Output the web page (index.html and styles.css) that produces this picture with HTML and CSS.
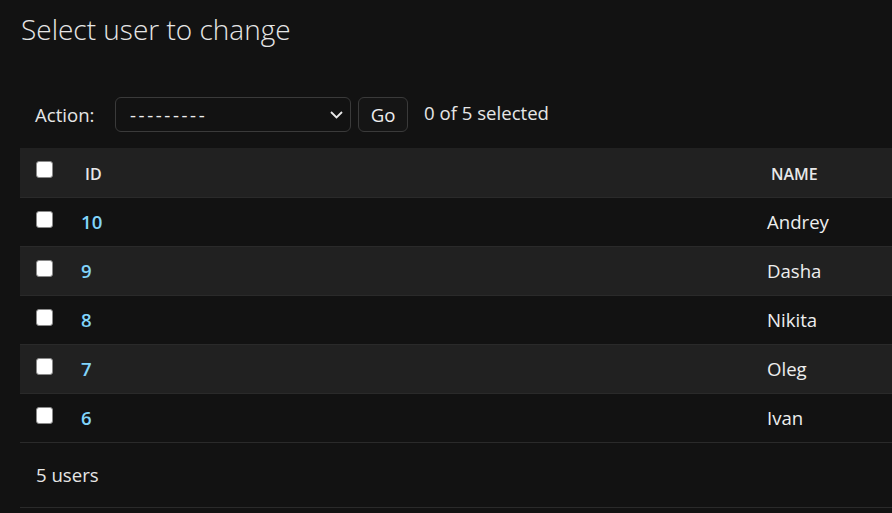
FILE: index.html
```html
<!DOCTYPE html>
<html lang="en">
<head>
<meta charset="utf-8">
<title>Select user to change</title>
<link rel="stylesheet" href="styles.css">
</head>
<body>
<div class="page">
  <h1 class="title">Select user to change</h1>
  <div class="actions">
    <span class="action-label">Action:</span>
    <div class="select">
      <span class="select-text">---------</span>
      <svg class="chevron" width="13" height="8" viewBox="0 0 13 8"><path d="M1 1 L6.5 6.5 L12 1" fill="none" stroke="#e8e8e8" stroke-width="1.8"/></svg>
    </div>
    <button class="go">Go</button>
    <span class="counter">0 of 5 selected</span>
  </div>
  <table class="results">
    <colgroup>
      <col class="c1">
      <col class="c2">
      <col class="c3">
    </colgroup>
    <thead>
      <tr>
        <th class="col-check"><input type="checkbox" class="cb"></th>
        <th class="col-id"><span class="th-label">ID</span></th>
        <th class="col-name"><span class="th-label">NAME</span></th>
      </tr>
    </thead>
    <tbody>
      <tr><td class="col-check"><input type="checkbox" class="cb"></td><th class="col-id"><a href="#">10</a></th><td class="col-name">Andrey</td></tr>
      <tr><td class="col-check"><input type="checkbox" class="cb"></td><th class="col-id"><a href="#">9</a></th><td class="col-name">Dasha</td></tr>
      <tr><td class="col-check"><input type="checkbox" class="cb"></td><th class="col-id"><a href="#">8</a></th><td class="col-name">Nikita</td></tr>
      <tr><td class="col-check"><input type="checkbox" class="cb"></td><th class="col-id"><a href="#">7</a></th><td class="col-name">Oleg</td></tr>
      <tr><td class="col-check"><input type="checkbox" class="cb"></td><th class="col-id"><a href="#">6</a></th><td class="col-name">Ivan</td></tr>
    </tbody>
  </table>
  <p class="paginator">5 users</p>
</div>
</body>
</html>
```

FILE: styles.css
```css
html, body {
  margin: 0;
  padding: 0;
  background: #121212;
  overflow: hidden;
}
body {
  font-family: "Open Sans", "Noto Sans", sans-serif;
  font-size: 18.6px;
  color: #eeeeee;
}
.page {
  width: 1100px;
  padding: 9px 0 0 20px;
}
.title {
  margin: 0 0 48px 1px;
  font-size: 28px;
  font-weight: 300;
  line-height: 40px;
  color: #e6e6e6;
}
.actions {
  display: flex;
  align-items: center;
  height: 35px;
  margin-bottom: 16px;
}
.action-label {
  margin-left: 15px;
  width: 80px;
  color: #e6e6e6;
}
.select {
  box-sizing: border-box;
  width: 236px;
  height: 35px;
  border: 1px solid #3a3a3a;
  border-radius: 6px;
  display: flex;
  align-items: center;
  justify-content: space-between;
  padding: 0 7px 0 14px;
}
.select-text {
  letter-spacing: 2.6px;
  color: #eeeeee;
}
.chevron {
  margin-top: 1px;
}
.go {
  box-sizing: border-box;
  margin-left: 7px;
  width: 50px;
  height: 35px;
  border: 1px solid #3a3a3a;
  border-radius: 6px;
  background: #151515;
  color: #eeeeee;
  font-family: inherit;
  font-size: 18.6px;
  padding: 0;
}
.counter {
  margin-left: 16px;
  margin-bottom: 5px;
  color: #e6e6e6;
}
.results {
  border-collapse: collapse;
  width: 1080px;
  table-layout: fixed;
}
.c1 { width: 50px; }
.c2 { width: 686px; }
.c3 { width: 344px; }
.results th, .results td {
  padding: 0;
  text-align: left;
  border-bottom: 1px solid #2a2a2a;
  box-sizing: border-box;
}
.results thead tr {
  height: 49px;
}
.results thead th {
  background: #212121;
  font-size: 16px;
  font-weight: 600;
  color: #e8e8e8;
  vertical-align: middle;
  padding-top: 3px;
}
.results tbody tr {
  height: 49px;
}
.results tbody tr:nth-child(even) {
  background: #212121;
}
.results .col-check {
  vertical-align: top;
  padding: 13px 0 0 16px;
}
.results thead th.col-check {
  padding-top: 13px;
  vertical-align: top;
}
.results .col-id {
  padding-left: 11px;
}
.th-label {
  padding-left: 4px;
}
.results tbody th.col-id {
  font-weight: 600;
  vertical-align: middle;
}
.results tbody th.col-id a {
  color: #81d4fa;
  text-decoration: none;
}
.results .col-name {
  padding-left: 11px;
  vertical-align: middle;
}
.results tbody td.col-name {
  font-weight: 400;
}
.cb {
  appearance: none;
  -webkit-appearance: none;
  display: block;
  margin: 0;
  width: 17px;
  height: 17px;
  box-sizing: border-box;
  border: 1.5px solid #8a8a8a;
  border-radius: 3px;
  background: #ffffff;
}
.paginator {
  margin: 0;
  width: 1080px;
  height: 65px;
  box-sizing: border-box;
  border-bottom: 1px solid #2a2a2a;
  padding-left: 16px;
  display: flex;
  align-items: center;
  color: #e6e6e6;
}
```
